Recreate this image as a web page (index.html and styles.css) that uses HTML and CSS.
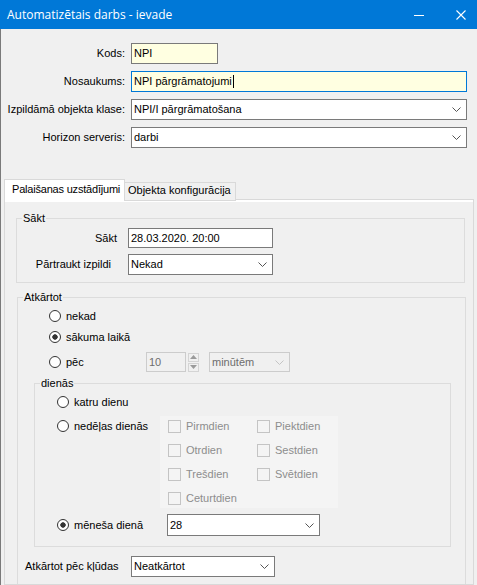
FILE: index.html
```html
<!DOCTYPE html>
<html lang="lv">
<head>
<meta charset="utf-8">
<title>Automatizētais darbs - ievade</title>
<link rel="stylesheet" href="styles.css">
</head>
<body>
<div class="titlebar">
  <span class="title">Automatizētais darbs - ievade</span>
  <div class="controls">
    <div class="ctrl min"><svg width="10" height="10" viewBox="0 0 10 10"><path d="M0 5.5 H10" stroke="#fff" stroke-width="1"/></svg></div>
    <div class="ctrl close"><svg width="10" height="10" viewBox="0 0 10 10"><path d="M0.5 0.5 L9.5 9.5 M9.5 0.5 L0.5 9.5" stroke="#fff" stroke-width="1.1" fill="none"/></svg></div>
  </div>
</div>
<div class="content">
  <div class="top-form">
    <label class="lbl">Kods:</label>
    <div class="field yellow short">NPI</div>
    <label class="lbl">Nosaukums:</label>
    <div class="field yellow focus">NPI pārgrāmatojumi<span class="caret"></span></div>
    <label class="lbl">Izpildāmā objekta klase:</label>
    <div class="field combo"><span>NPI/I pārgrāmatošana</span><svg class="chev" width="9" height="5" viewBox="0 0 9 5"><path d="M0.5 0.5 L4.5 4.5 L8.5 0.5" fill="none" stroke="#555"/></svg></div>
    <label class="lbl">Horizon serveris:</label>
    <div class="field combo"><span>darbi</span><svg class="chev" width="9" height="5" viewBox="0 0 9 5"><path d="M0.5 0.5 L4.5 4.5 L8.5 0.5" fill="none" stroke="#555"/></svg></div>
  </div>

  <div class="tabs">
    <div class="tab active">Palaišanas uzstādījumi</div>
    <div class="tab">Objekta konfigurācija</div>
  </div>

  <div class="panel">
    <fieldset class="group g-sakt">
      <legend>Sākt</legend>
      <div class="srow srow1">
        <span class="slbl">Sākt</span>
        <div class="field sinput">28.03.2020. 20:00</div>
      </div>
      <div class="srow srow2">
        <span class="slbl pad">Pārtraukt izpildi</span>
        <div class="field combo sinput tall"><span>Nekad</span><svg class="chev" width="9" height="5" viewBox="0 0 9 5"><path d="M0.5 0.5 L4.5 4.5 L8.5 0.5" fill="none" stroke="#555"/></svg></div>
      </div>
    </fieldset>

    <fieldset class="group g-atk">
      <legend>Atkārtot</legend>
      <div class="rrow r1"><span class="radio"></span><span>nekad</span></div>
      <div class="rrow r2"><span class="radio checked"></span><span>sākuma laikā</span></div>
      <div class="rrow r3">
        <div class="rlabel w97"><span class="radio"></span><span>pēc</span></div>
        <div class="field dis spin-in">10</div>
        <div class="spin">
          <div class="sbtn"><svg width="7" height="4" viewBox="0 0 7 4"><path d="M0 4 L3.5 0 L7 4 Z" fill="#9a9a9a"/></svg></div>
          <div class="sbtn"><svg width="7" height="4" viewBox="0 0 7 4"><path d="M0 0 L3.5 4 L7 0 Z" fill="#9a9a9a"/></svg></div>
        </div>
        <div class="field combo dis mins"><span>minūtēm</span><svg class="chev" width="9" height="5" viewBox="0 0 9 5"><path d="M0.5 0.5 L4.5 4.5 L8.5 0.5" fill="none" stroke="#c4c4c4"/></svg></div>
      </div>

      <fieldset class="group g-dien">
        <legend>dienās</legend>
        <div class="drow d1"><span class="radio"></span><span>katru dienu</span></div>
        <div class="drow d2">
          <div class="rlabel w103"><span class="radio"></span><span>nedēļas dienās</span></div>
          <div class="checks">
            <div class="chk"><span class="box"></span><span>Pirmdien</span></div>
            <div class="chk"><span class="box"></span><span>Piektdien</span></div>
            <div class="chk"><span class="box"></span><span>Otrdien</span></div>
            <div class="chk"><span class="box"></span><span>Sestdien</span></div>
            <div class="chk"><span class="box"></span><span>Trešdien</span></div>
            <div class="chk"><span class="box"></span><span>Svētdien</span></div>
            <div class="chk"><span class="box"></span><span>Ceturtdien</span></div>
          </div>
        </div>
        <div class="drow d3">
          <div class="rlabel w110"><span class="radio checked"></span><span>mēneša dienā</span></div>
          <div class="field combo month"><span>28</span><svg class="chev" width="9" height="5" viewBox="0 0 9 5"><path d="M0.5 0.5 L4.5 4.5 L8.5 0.5" fill="none" stroke="#555"/></svg></div>
        </div>
      </fieldset>

      <div class="erow">
        <span class="elbl">Atkārtot pēc kļūdas</span>
        <div class="field combo err"><span>Neatkārtot</span><svg class="chev" width="9" height="5" viewBox="0 0 9 5"><path d="M0.5 0.5 L4.5 4.5 L8.5 0.5" fill="none" stroke="#555"/></svg></div>
      </div>
    </fieldset>
  </div>
</div>
</body>
</html>
```

FILE: styles.css
```css
html, body {
  margin: 0;
  padding: 0;
  overflow: hidden;
  background: #f0f0f0;
}
body {
  width: 477px;
  height: 585px;
  font-family: "Liberation Sans", Arial, sans-serif;
  font-size: 11px;
  line-height: 13px;
  color: #000;
}

/* title bar */
.titlebar {
  height: 29px;
  background: #0078d7;
  color: #fff;
  display: flex;
  align-items: center;
  justify-content: space-between;
  padding-left: 7px;
  font-family: "Open Sans", "Noto Sans", sans-serif;
  font-size: 12px;
}
.title { padding-bottom: 1px; }
.controls { display: flex; height: 29px; }
.ctrl { display: flex; align-items: center; justify-content: center; }
.ctrl.min { width: 51px; }
.ctrl.close { width: 33px; }

/* content */
.content {
  border-left: 1px solid #7a7a7a;
  height: 556px;
  box-sizing: border-box;
  overflow: hidden;
}

.top-form {
  display: grid;
  grid-template-columns: 124px 336px;
  column-gap: 6px;
  row-gap: 7px;
  padding-top: 14px;
}
.lbl {
  text-align: right;
  align-self: center;
}
.field {
  box-sizing: border-box;
  height: 21px;
  border: 1px solid #7a7a7a;
  background: #fff;
  padding-left: 2px;
  display: flex;
  align-items: center;
  white-space: nowrap;
}
.field.yellow { background: #ffffe1; }
.field.focus { border-color: #0078d7; }
.field.short { width: 87px; }
.caret {
  display: inline-block;
  width: 1px;
  height: 13px;
  background: #000;
  margin-left: 1px;
}
.combo {
  justify-content: space-between;
  padding-right: 5px;
}

/* tabs */
.tabs {
  display: flex;
  align-items: flex-end;
  margin-top: 31px;
  margin-left: 3px;
  margin-bottom: -2px;
}
.tab {
  box-sizing: border-box;
  height: 19px;
  width: 111px;
  border: 1px solid #d9d9d9;
  border-left: none;
  background: #f0f0f0;
  padding-left: 3px;
  display: flex;
  align-items: center;
  padding-bottom: 2px;
  white-space: nowrap;
  overflow: hidden;
}
.tab.active {
  position: relative;
  z-index: 1;
  height: 22px;
  width: 121px;
  background: #fff;
  border: 1px solid #d9d9d9;
  border-bottom: none;
  padding-left: 7px;
  padding-bottom: 2px;
  letter-spacing: -0.2px;
}

.panel {
  box-sizing: border-box;
  margin-left: 3px;
  width: 470px;
  height: 386px;
  overflow: hidden;
  border: 1px solid #d9d9d9;
  background: #f0f0f0;
  box-shadow: inset 0 2px 0 #fff;
  padding-top: 1px;
}

/* group boxes */
.group {
  border: 1px solid #dcdcdc;
  padding: 0;
  margin: 0;
  min-width: 0;
}
.group legend {
  padding: 0 1px;
  margin-left: 5px;
  line-height: 13px;
}
.g-sakt {
  margin: 11px 8px 0 11px;
  padding-bottom: 7px;
}
.srow {
  display: flex;
  align-items: center;
}
.srow1 { margin-top: 3px; }
.srow2 { margin-top: 6px; }
.slbl {
  width: 100px;
  text-align: right;
  flex-shrink: 0;
}
.slbl.pad { box-sizing: border-box; padding-right: 6px; }
.sinput {
  margin-left: 11px;
  width: 145px;
  height: 20px;
}
.sinput.tall { height: 21px; }

.g-atk {
  margin: 8px 7px 0 12px;
  padding-bottom: 40px;
}
.rrow {
  display: flex;
  align-items: center;
  height: 20px;
  padding-left: 31px;
}
.r1 { margin-top: 2px; }
.r2 { margin-top: 1px; }
.r3 { margin-top: 5px; }
.radio {
  box-sizing: border-box;
  width: 12px;
  height: 12px;
  border: 1px solid #333;
  border-radius: 50%;
  background: #fff;
  margin-right: 5px;
  flex-shrink: 0;
}
.radio.checked {
  background: radial-gradient(circle, #333 0 2.4px, #fff 3px);
}
.rlabel {
  display: flex;
  align-items: center;
  flex-shrink: 0;
  height: 20px;
}
.w97 { width: 97px; }
.w103 { width: 103px; }
.w110 { width: 110px; }

.field.dis {
  border-color: #cccccc;
  color: #6d6d6d;
  background: #f0f0f0;
}
.spin-in {
  width: 40px;
  height: 20px;
}
.spin {
  display: flex;
  flex-direction: column;
  gap: 1px;
  margin-left: 2px;
}
.sbtn {
  box-sizing: border-box;
  width: 11px;
  height: 9px;
  border: 1px solid #d4d4d4;
  background: #f0f0f0;
  display: flex;
  align-items: center;
  justify-content: center;
}
.mins {
  width: 81px;
  height: 20px;
  margin-left: 10px;
}

.g-dien {
  margin: 5px 14px 0 16px;
  padding-bottom: 10px;
}
.drow {
  display: flex;
  padding-left: 22px;
}
.d1 {
  align-items: center;
  height: 20px;
  margin-top: 2px;
}
.d2 {
  align-items: flex-start;
  margin-top: 4px;
}
.d3 {
  align-items: center;
  margin-top: 6px;
}
.checks {
  box-sizing: border-box;
  width: 178px;
  background: #f4f4f4;
  padding-left: 8px;
  display: grid;
  grid-template-columns: 89px 81px;
  grid-auto-rows: 20px;
  row-gap: 4px;
  color: #8d8d8d;
}
.chk {
  display: flex;
  align-items: center;
}
.box {
  box-sizing: border-box;
  width: 13px;
  height: 13px;
  border: 1px solid #c4c4c4;
  margin-right: 5px;
  flex-shrink: 0;
}
.month {
  width: 153px;
  height: 22px;
}

.erow {
  display: flex;
  align-items: center;
  margin-top: 9px;
  padding-left: 7px;
}
.elbl {
  width: 106px;
  flex-shrink: 0;
}
.err {
  width: 144px;
  height: 21px;
}
```
